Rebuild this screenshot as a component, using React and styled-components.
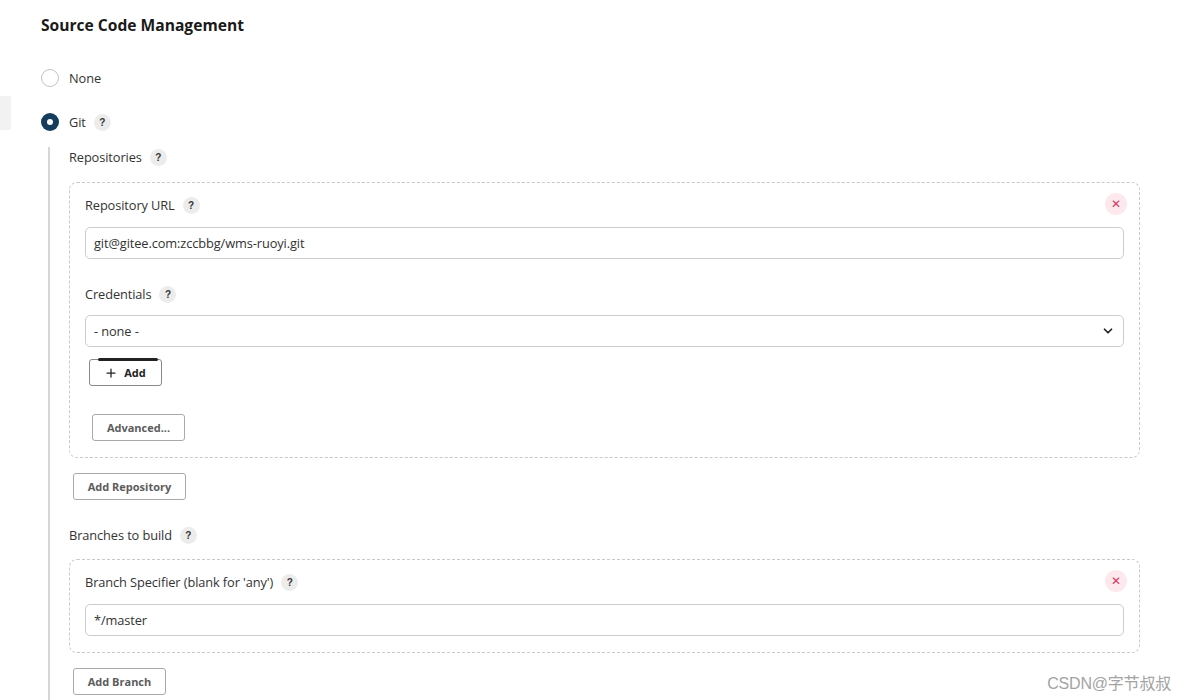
import React from "react";
import styled, { createGlobalStyle } from "styled-components";

const GlobalStyle = createGlobalStyle`
  html, body {
    margin: 0;
    padding: 0;
    background: #fff;
  }
  body {
    font-family: "Open Sans", "Noto Sans", sans-serif;
    color: #333;
  }
`;

const Page = styled.div`
  position: relative;
  width: 1184px;
  height: 700px;
  overflow: hidden;
  padding: 13px 0 0 41px;
  box-sizing: border-box;
`;

const SideTab = styled.div`
  position: absolute;
  left: 0;
  top: 96px;
  width: 11px;
  height: 34px;
  background: #f2f2f2;
`;

const Title = styled.h2`
  margin: 0;
  font-size: 15.6px;
  line-height: 24px;
  font-weight: 700;
  color: #1a1a1a;
`;

const RadioRow = styled.label`
  display: flex;
  align-items: center;
  height: 20px;
  margin-top: ${(p) => p.$top}px;
  font-size: 12.8px;
  letter-spacing: -0.1px;
  color: #333;
`;

const RadioDot = styled.span`
  width: 18px;
  height: 18px;
  border-radius: 50%;
  box-sizing: border-box;
  margin-right: 10px;
  display: flex;
  align-items: center;
  justify-content: center;
  border: ${(p) => (p.$checked ? "none" : "1.5px solid #c4c4c4")};
  background: ${(p) => (p.$checked ? "#143c5c" : "#fff")};
  &::after {
    content: "";
    display: ${(p) => (p.$checked ? "block" : "none")};
    width: 6px;
    height: 6px;
    border-radius: 50%;
    background: #fff;
  }
`;

const Help = styled.span`
  display: inline-flex;
  align-items: center;
  justify-content: center;
  width: 17px;
  height: 17px;
  border-radius: 50%;
  background: #ececec;
  color: #333;
  font-size: 10px;
  font-weight: 700;
  letter-spacing: 0;
  margin-left: 8px;
  font-family: "Liberation Sans", sans-serif;
`;

const Nested = styled.div`
  margin-left: 7px;
  margin-top: 15px;
  border-left: 2px solid #d6d6d6;
  padding-left: 19px;
  padding-bottom: 40px;
`;

const Label = styled.div`
  display: flex;
  align-items: center;
  height: 20px;
  font-size: 12.8px;
  letter-spacing: -0.1px;
  color: #333;
  margin-top: ${(p) => p.$top || 0}px;
`;

const Box = styled.div`
  position: relative;
  margin: ${(p) => p.$top}px 0 0 0;
  width: 1071px;
  box-sizing: border-box;
  border: 1.5px dashed #c9c9c9;
  border-radius: 8px;
  padding: 12px 15px 16px 15px;
`;

const CloseButton = styled.button`
  position: absolute;
  top: 10px;
  right: 12px;
  width: 22px;
  height: 22px;
  border-radius: 50%;
  border: none;
  background: #fde9ed;
  color: #d23a5c;
  font-size: 12px;
  line-height: 1;
  padding: 0;
  display: flex;
  align-items: center;
  justify-content: center;
`;

const TextInput = styled.div`
  margin-top: ${(p) => p.$top}px;
  height: 32px;
  box-sizing: border-box;
  border: 1.5px solid #cdcdcd;
  border-radius: 5px;
  padding: 0 8px;
  display: flex;
  align-items: center;
  justify-content: space-between;
  font-size: 12.8px;
  letter-spacing: -0.1px;
  color: #333;
`;

const Button = styled.button`
  display: flex;
  align-items: center;
  gap: 7px;
  box-sizing: border-box;
  margin: ${(p) => p.$top}px 0 0 ${(p) => p.$left}px;
  width: ${(p) => p.$w}px;
  height: 27px;
  background: #fff;
  border: 1.5px solid ${(p) => (p.$dark ? "#8a8a8a" : "#a9a9a9")};
  border-radius: 3px;
  justify-content: center;
  font-family: "Open Sans", sans-serif;
  font-size: 11px;
  font-weight: 700;
  color: ${(p) => (p.$dark ? "#222" : "#5c5c5c")};
  position: relative;
`;

const CursorMark = styled.span`
  position: absolute;
  top: -2px;
  left: 8px;
  right: 3px;
  height: 3px;
  border-radius: 2px;
  background: #222;
`;

const Watermark = styled.div`
  position: absolute;
  right: 13px;
  bottom: 6px;
  font-family: "Liberation Sans", "Noto Sans CJK SC", sans-serif;
  font-size: 16px;
  letter-spacing: -0.2px;
  color: #a3a3a3;
`;

const Chevron = () => (
  <svg width="14" height="14" viewBox="0 0 24 24" fill="none" stroke="#222" strokeWidth="3" strokeLinecap="round" strokeLinejoin="round">
    <path d="M6 9l6 6 6-6" />
  </svg>
);

const Plus = () => (
  <svg width="12" height="12" viewBox="0 0 24 24" fill="none" stroke="#222" strokeWidth="2.5" strokeLinecap="round">
    <path d="M12 4v16M4 12h16" />
  </svg>
);

export default function App() {
  return (
    <>
      <GlobalStyle />
      <Page>
        <SideTab />
        <Title>Source Code Management</Title>
        <RadioRow $top={31}>
          <RadioDot />
          None
        </RadioRow>
        <RadioRow $top={24}>
          <RadioDot $checked />
          Git
          <Help>?</Help>
        </RadioRow>
        <Nested>
          <Label>
            Repositories
            <Help>?</Help>
          </Label>
          <Box $top={15}>
            <CloseButton>✕</CloseButton>
            <Label>
              Repository URL
              <Help>?</Help>
            </Label>
            <TextInput $top={12}>git@gitee.com:zccbbg/wms-ruoyi.git</TextInput>
            <Label $top={25}>
              Credentials
              <Help>?</Help>
            </Label>
            <TextInput $top={11}>
              - none -
              <Chevron />
            </TextInput>
            <Button $top={12} $left={4} $w={73} $dark>
              <CursorMark />
              <Plus />
              Add
            </Button>
            <Button $top={28} $left={7} $w={93}>
              Advanced...
            </Button>
          </Box>
          <Button $top={15} $left={4} $w={113}>
            Add Repository
          </Button>
          <Label $top={25}>
            Branches to build
            <Help>?</Help>
          </Label>
          <Box $top={14}>
            <CloseButton>✕</CloseButton>
            <Label>
              Branch Specifier (blank for 'any')
              <Help>?</Help>
            </Label>
            <TextInput $top={12}>*/master</TextInput>
          </Box>
          <Button $top={15} $left={4} $w={93}>
            Add Branch
          </Button>
        </Nested>
        <Watermark>CSDN@字节叔叔</Watermark>
      </Page>
    </>
  );
}
